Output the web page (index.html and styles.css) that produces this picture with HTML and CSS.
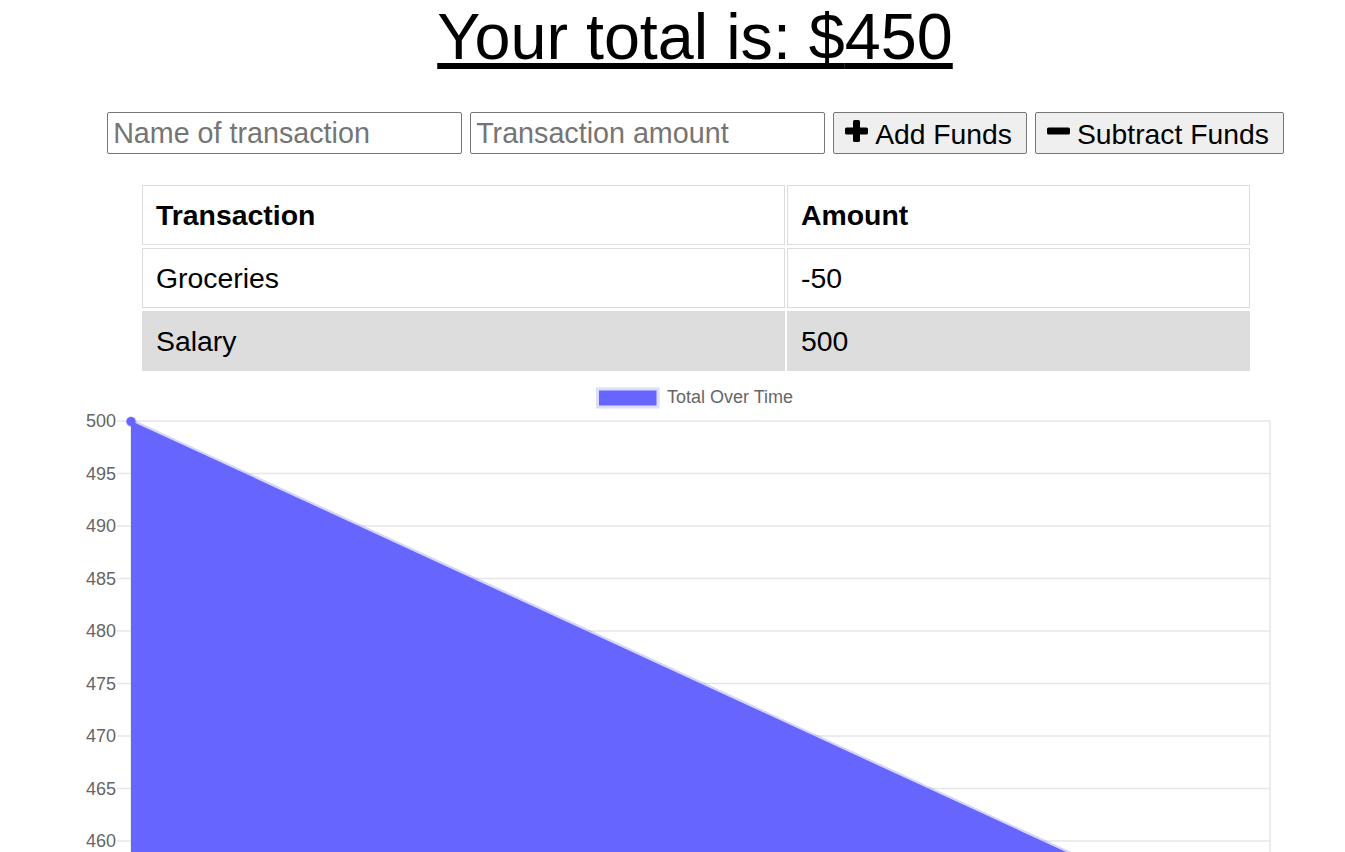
FILE: index.html
```html
<!DOCTYPE html>
<html lang="en">
<head>
<meta charset="utf-8">
<title>Budget Tracker</title>
<link rel="stylesheet" href="styles.css">
</head>
<body>
<div class="page">
  <h1 class="total">Your total is: $<span id="total">450</span></h1>

  <div class="form">
    <input class="field" type="text" placeholder="Name of transaction">
    <input class="field" type="number" placeholder="Transaction amount">
    <button class="btn" type="button">
      <svg class="icon" viewBox="0 0 23 22" width="23" height="22" aria-hidden="true">
        <rect x="8" y="0" width="7" height="22" rx="1.6" fill="#000"/>
        <rect x="0" y="7.5" width="23" height="7" rx="1.6" fill="#000"/>
      </svg>
      <span>Add Funds</span>
    </button>
    <button class="btn" type="button">
      <svg class="icon" viewBox="0 0 23 22" width="23" height="22" aria-hidden="true">
        <rect x="0" y="7.5" width="23" height="7" rx="1.6" fill="#000"/>
      </svg>
      <span>Subtract Funds</span>
    </button>
  </div>

  <table class="tx">
    <thead>
      <tr><th class="col-name">Transaction</th><th>Amount</th></tr>
    </thead>
    <tbody>
      <tr><td>Groceries</td><td>-50</td></tr>
      <tr class="alt"><td>Salary</td><td>500</td></tr>
    </tbody>
  </table>

  <svg class="chart" viewBox="0 374 1390 478" width="1390" height="478">
    <g class="legend">
      <rect x="597.5" y="389" width="60.5" height="18" fill="#6666ff" stroke="#dcdcfb" stroke-width="3"/>
      <text x="667" y="403.3" class="legend-text">Total Over Time</text>
    </g>
    <g class="grid" stroke="#e6e6e6" stroke-width="1.5">
      <line x1="117" y1="421" x2="1270" y2="421"/>
      <line x1="117" y1="473.5" x2="1270" y2="473.5"/>
      <line x1="117" y1="526" x2="1270" y2="526"/>
      <line x1="117" y1="578.5" x2="1270" y2="578.5"/>
      <line x1="117" y1="631" x2="1270" y2="631"/>
      <line x1="117" y1="683.5" x2="1270" y2="683.5"/>
      <line x1="117" y1="736" x2="1270" y2="736"/>
      <line x1="117" y1="788.5" x2="1270" y2="788.5"/>
      <line x1="117" y1="841" x2="1270" y2="841"/>
      <line x1="117" y1="893.5" x2="1270" y2="893.5"/>
      <line x1="1270" y1="421" x2="1270" y2="960"/>
      <line x1="131" y1="421" x2="131" y2="960"/>
    </g>
    <g class="ylabels">
      <text x="116" y="427.4">500</text>
      <text x="116" y="479.9">495</text>
      <text x="116" y="532.4">490</text>
      <text x="116" y="584.9">485</text>
      <text x="116" y="637.4">480</text>
      <text x="116" y="689.9">475</text>
      <text x="116" y="742.4">470</text>
      <text x="116" y="794.9">465</text>
      <text x="116" y="847.4">460</text>
    </g>
    <polygon points="131,421 1270,946 131,946" fill="#6666ff"/>
    <line x1="131" y1="421" x2="1270" y2="946" stroke="rgba(102,102,255,0.28)" stroke-width="4.4"/>
    <circle cx="131" cy="421.5" r="4.5" fill="#6666ff" stroke="rgba(102,102,255,0.3)" stroke-width="1.5"/>
  </svg>
</div>
</body>
</html>
```

FILE: styles.css
```css
html, body {
  margin: 0;
  padding: 0;
  overflow: hidden;
  background: #fff;
}

body {
  font-family: "Liberation Sans", Arial, sans-serif;
  color: #000;
  height: 852px;
}

.page {
  width: 1390px;
}

.total {
  margin: 0;
  font-size: 64.7px;
  font-weight: normal;
  line-height: 74px;
  height: 74px;
  text-align: center;
  text-decoration: underline;
}

.form {
  display: flex;
  justify-content: center;
  gap: 8px;
  margin-top: 38px;
  height: 42px;
  padding-left: 1px;
}

.field {
  box-sizing: border-box;
  width: 355px;
  height: 42px;
  margin: 0;
  padding: 0 5px;
  border: 1px solid #767676;
  border-radius: 2px;
  font-family: "Liberation Sans", Arial, sans-serif;
  font-size: 28.7px;
  line-height: 32px;
  color: #000;
  background: #fff;
  -moz-appearance: textfield;
}

.field::-webkit-outer-spin-button,
.field::-webkit-inner-spin-button {
  -webkit-appearance: none;
  margin: 0;
}

.field::placeholder {
  color: #757575;
  opacity: 1;
}

.btn {
  box-sizing: border-box;
  display: flex;
  align-items: center;
  gap: 7px;
  height: 42px;
  margin: 0;
  padding: 0 14px 0 11px;
  border: 1px solid #767676;
  border-radius: 2px;
  background: #efefef;
  font-family: "Liberation Sans", Arial, sans-serif;
  font-size: 28.3px;
  line-height: 32px;
  color: #000;
}

.btn span {
  position: relative;
  top: 1px;
}

.icon {
  display: block;
  flex: none;
  position: relative;
  top: -2px;
}

.tx {
  width: 1112px;
  margin: 28px 0 0 140px;
  border-spacing: 2px 3px;
  font-size: 28.4px;
  line-height: 32px;
}

.tx th,
.tx td {
  box-sizing: border-box;
  height: 60px;
  padding: 0 13px;
  border: 1px solid #dddddd;
  text-align: left;
  vertical-align: middle;
}

.tx th {
  font-weight: bold;
}

.tx .col-name {
  width: 643px;
}

.tx .alt td {
  background: #dddddd;
}

.chart {
  display: block;
}

.chart text {
  font-family: "Liberation Sans", Arial, sans-serif;
  font-size: 18px;
  fill: #666666;
}

.ylabels text {
  text-anchor: end;
}
```
